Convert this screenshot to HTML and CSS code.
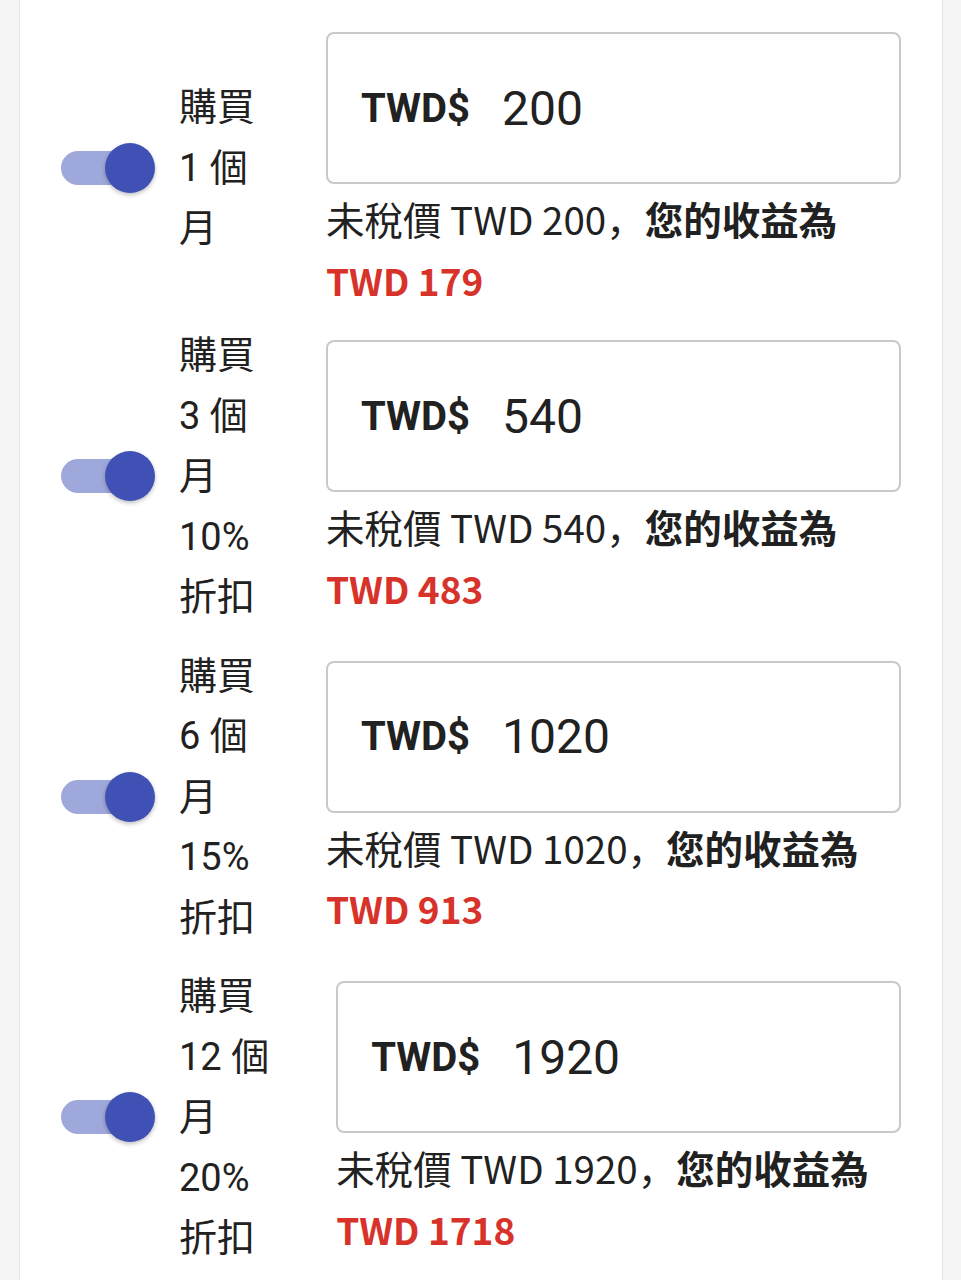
FILE: index.html
```html
<!DOCTYPE html>
<html lang="zh-Hans">
<head>
<meta charset="UTF-8">
<meta name="viewport" content="width=device-width, initial-scale=1.0">
<title>訂閱方案</title>
<link rel="stylesheet" href="styles.css">
</head>
<body>

<div class="card">

  <div class="plan">
    <div class="switch"><span class="track"></span><span class="thumb"></span></div>
    <div class="plan-label">購買<br>1 個<br>月</div>
    <div class="plan-price">
      <div class="price-box"><span class="currency">TWD$</span><span class="amount">200</span></div>
      <div class="price-note">未稅價 TWD 200，<b>您的收益為</b> <span class="earn">TWD 179</span></div>
    </div>
  </div>

  <div class="plan">
    <div class="switch"><span class="track"></span><span class="thumb"></span></div>
    <div class="plan-label">購買<br>3 個<br>月<br>10%<br>折扣</div>
    <div class="plan-price">
      <div class="price-box"><span class="currency">TWD$</span><span class="amount">540</span></div>
      <div class="price-note">未稅價 TWD 540，<b>您的收益為</b> <span class="earn">TWD 483</span></div>
    </div>
  </div>

  <div class="plan">
    <div class="switch"><span class="track"></span><span class="thumb"></span></div>
    <div class="plan-label">購買<br>6 個<br>月<br>15%<br>折扣</div>
    <div class="plan-price">
      <div class="price-box"><span class="currency">TWD$</span><span class="amount">1020</span></div>
      <div class="price-note">未稅價 TWD 1020，<b>您的收益為</b> <span class="earn">TWD 913</span></div>
    </div>
  </div>

  <div class="plan">
    <div class="switch"><span class="track"></span><span class="thumb"></span></div>
    <div class="plan-label">購買<br>12 個<br>月<br>20%<br>折扣</div>
    <div class="plan-price">
      <div class="price-box"><span class="currency">TWD$</span><span class="amount">1920</span></div>
      <div class="price-note">未稅價 TWD 1920，<b>您的收益為</b> <span class="earn">TWD 1718</span></div>
    </div>
  </div>

</div>

</body>
</html>
```

FILE: styles.css
```css
body {
  margin: 0;
  padding: 0;
  background-color: #f5f5f5;
  color: #212121;
  font-family: Roboto, "Noto Sans CJK TC", sans-serif;
}
.card {
  background-color: #fff;
  border-left: 1px solid #e4e4e4;
  border-right: 1px solid #e4e4e4;
  margin: 0 18px 0 19px;
  padding: 32px 41px 40px 41px;
  min-height: 1280px;
  box-sizing: border-box;
}
.plan {
  display: flex;
  align-items: center;
  margin-bottom: 18px;
}
.switch {
  position: relative;
  width: 94px;
  height: 50px;
  flex-shrink: 0;
  margin-right: 24px;
  transform: translateY(-3px);
}
.track {
  display: block;
  width: 78px;
  height: 34px;
  margin-top: 8px;
  border-radius: 17px;
  background-color: #9fa8da;
}
.thumb {
  position: absolute;
  top: 0;
  right: 0;
  width: 50px;
  height: 50px;
  border-radius: 50%;
  background-color: #3f51b5;
  box-shadow: 0 2px 4px rgba(0, 0, 0, 0.25);
}
.plan-label {
  min-width: 80px;
  font-size: 38px;
  line-height: 60.5px;
  margin-right: 67px;
  white-space: nowrap;
  transform: translateY(-3px);
}
.plan-price {
  flex: 1;
}
.price-box {
  height: 152px;
  box-sizing: border-box;
  border: 2px solid #c9c9c9;
  border-radius: 8px;
  padding-left: 33px;
  display: flex;
  align-items: center;
}
.currency {
  font-size: 40px;
  font-weight: 700;
  margin-right: 32px;
}
.amount {
  font-size: 48px;
}
.price-note {
  margin-top: 4px;
  font-family: "Noto Sans CJK SC", "Noto Sans CJK TC", sans-serif;
  font-size: 38.5px;
  line-height: 60.5px;
}
.price-note b {
  font-weight: 700;
}
.earn {
  color: #d7332b;
  font-weight: 700;
  font-size: 37px;
  white-space: nowrap;
}
```
